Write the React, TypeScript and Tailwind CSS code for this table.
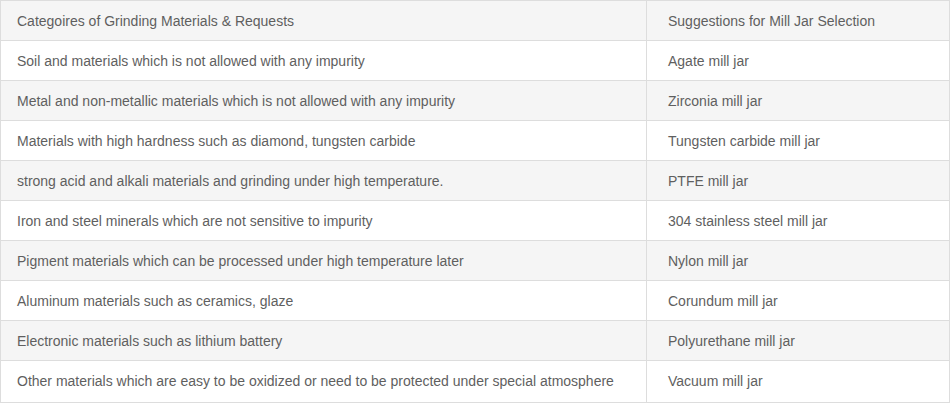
const rows: [string, string][] = [
  ['Soil and materials which is not allowed with any impurity', 'Agate mill jar'],
  ['Metal and non-metallic materials which is not allowed with any impurity', 'Zirconia mill jar'],
  ['Materials with high hardness such as diamond, tungsten carbide', 'Tungsten carbide mill jar'],
  ['strong acid and alkali materials and grinding under high temperature.', 'PTFE mill jar'],
  ['Iron and steel minerals which are not sensitive to impurity', '304 stainless steel mill jar'],
  ['Pigment materials which can be processed under high temperature later', 'Nylon mill jar'],
  ['Aluminum materials such as ceramics, glaze', 'Corundum mill jar'],
  ['Electronic materials such as lithium battery', 'Polyurethane mill jar'],
  ['Other materials which are easy to be oxidized or need to be protected under special atmosphere', 'Vacuum mill jar'],
]

export default function App() {
  return (
    <div className="w-[950px] bg-white font-['Liberation_Sans',Arial,sans-serif] text-[14px] text-[#5f5f5f]">
      <table className="w-[950px] border-collapse border border-[#ddd]">
        <thead>
          <tr className="h-[40px] bg-[#f5f5f5]">
            <th className="w-[646px] border border-[#ddd] pl-4 pt-[2px] text-left font-normal">
              Categoires of Grinding Materials &amp; Requests
            </th>
            <th className="border border-[#ddd] pl-[21px] pt-[2px] text-left font-normal">
              Suggestions for Mill Jar Selection
            </th>
          </tr>
        </thead>
        <tbody>
          {rows.map(([material, jar], i) => {
            const last = i === rows.length - 1
            return (
              <tr
                key={i}
                className={`${last ? 'h-[42px]' : 'h-[40px]'} ${i % 2 === 1 ? 'bg-[#f5f5f5]' : 'bg-white'}`}
              >
                <td className={`border border-[#ddd] pl-4 ${last ? 'pb-[1px]' : 'pt-[2px]'}`}>{material}</td>
                <td className={`border border-[#ddd] pl-[21px] ${last ? 'pb-[1px]' : 'pt-[2px]'}`}>{jar}</td>
              </tr>
            )
          })}
        </tbody>
      </table>
    </div>
  )
}
